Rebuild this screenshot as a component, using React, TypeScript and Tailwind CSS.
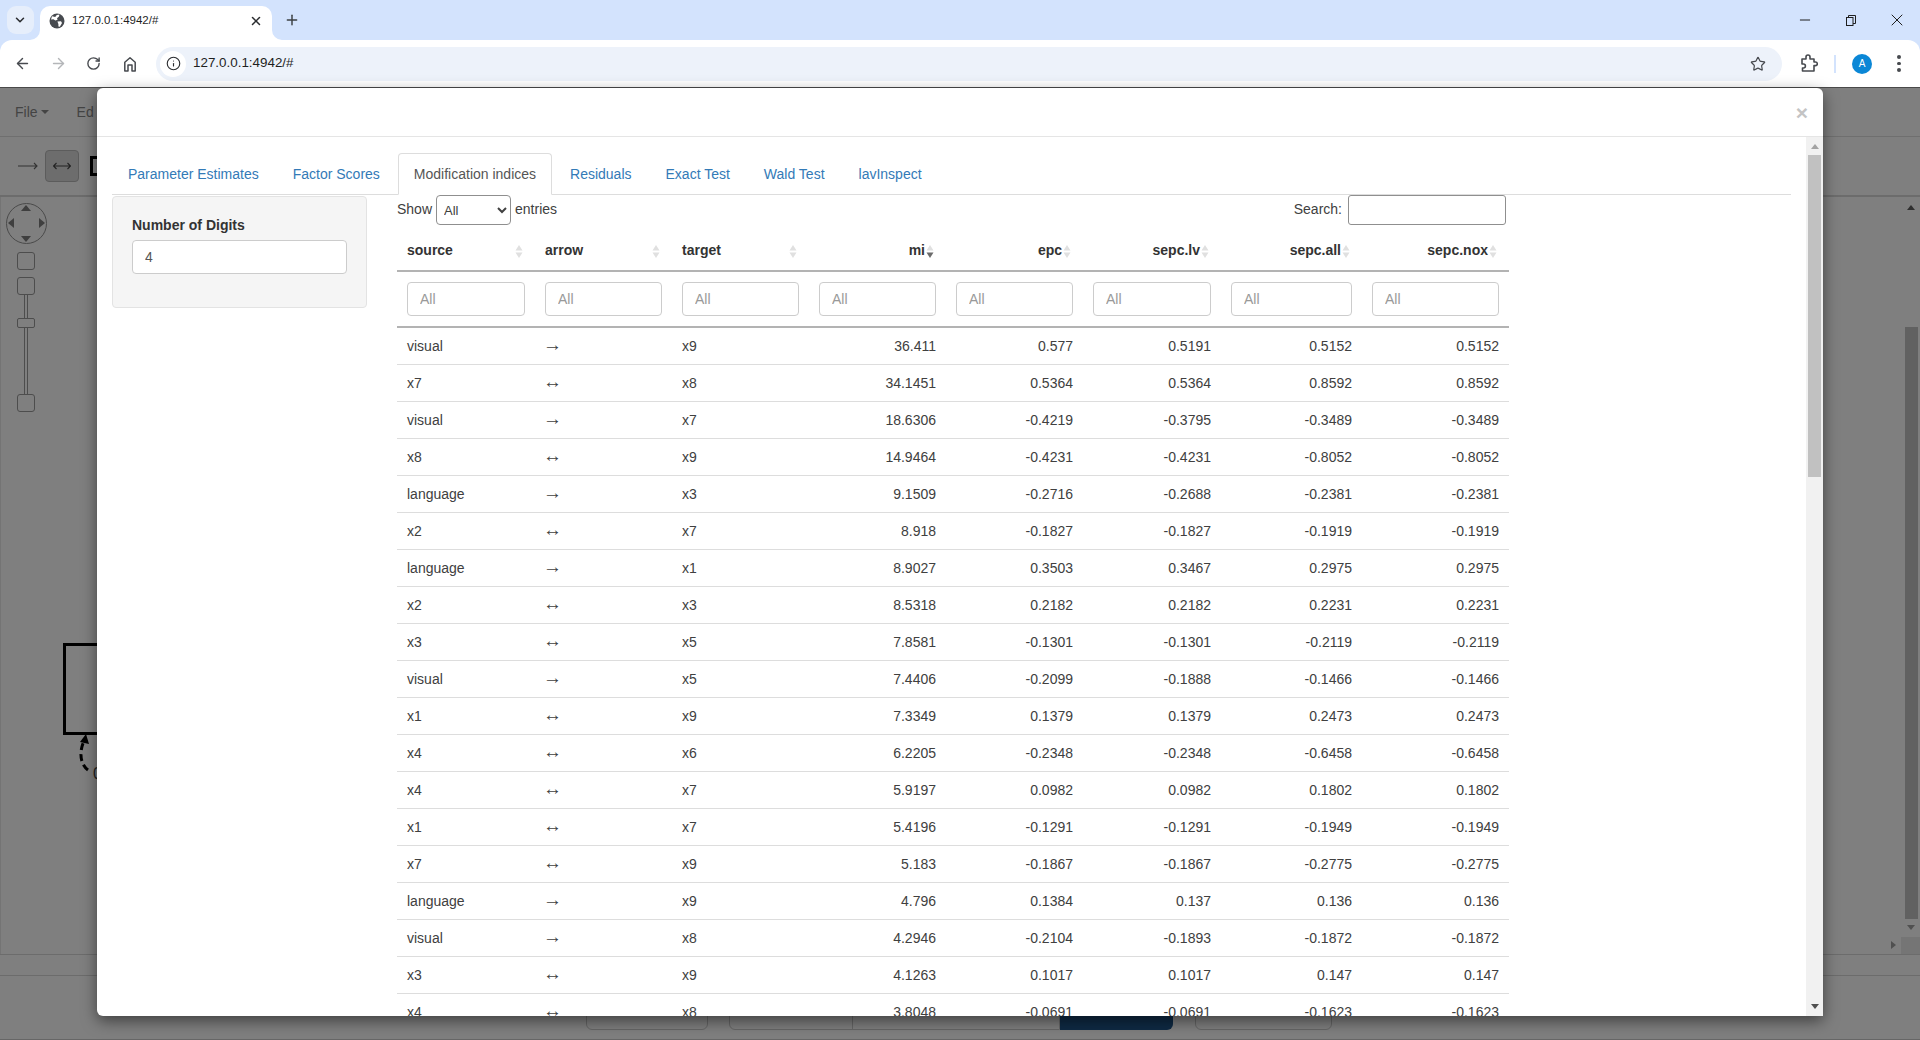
import React from "react";
import { ArrowLeft, ArrowRight, RotateCw, Info, Star, Plus, X, ChevronDown, Minus } from "lucide-react";

const rows: string[][] = [
  ["visual", "→", "x9", "36.411", "0.577", "0.5191", "0.5152", "0.5152"],
  ["x7", "↔", "x8", "34.1451", "0.5364", "0.5364", "0.8592", "0.8592"],
  ["visual", "→", "x7", "18.6306", "-0.4219", "-0.3795", "-0.3489", "-0.3489"],
  ["x8", "↔", "x9", "14.9464", "-0.4231", "-0.4231", "-0.8052", "-0.8052"],
  ["language", "→", "x3", "9.1509", "-0.2716", "-0.2688", "-0.2381", "-0.2381"],
  ["x2", "↔", "x7", "8.918", "-0.1827", "-0.1827", "-0.1919", "-0.1919"],
  ["language", "→", "x1", "8.9027", "0.3503", "0.3467", "0.2975", "0.2975"],
  ["x2", "↔", "x3", "8.5318", "0.2182", "0.2182", "0.2231", "0.2231"],
  ["x3", "↔", "x5", "7.8581", "-0.1301", "-0.1301", "-0.2119", "-0.2119"],
  ["visual", "→", "x5", "7.4406", "-0.2099", "-0.1888", "-0.1466", "-0.1466"],
  ["x1", "↔", "x9", "7.3349", "0.1379", "0.1379", "0.2473", "0.2473"],
  ["x4", "↔", "x6", "6.2205", "-0.2348", "-0.2348", "-0.6458", "-0.6458"],
  ["x4", "↔", "x7", "5.9197", "0.0982", "0.0982", "0.1802", "0.1802"],
  ["x1", "↔", "x7", "5.4196", "-0.1291", "-0.1291", "-0.1949", "-0.1949"],
  ["x7", "↔", "x9", "5.183", "-0.1867", "-0.1867", "-0.2775", "-0.2775"],
  ["language", "→", "x9", "4.796", "0.1384", "0.137", "0.136", "0.136"],
  ["visual", "→", "x8", "4.2946", "-0.2104", "-0.1893", "-0.1872", "-0.1872"],
  ["x3", "↔", "x9", "4.1263", "0.1017", "0.1017", "0.147", "0.147"],
  ["x4", "↔", "x8", "3.8048", "-0.0691", "-0.0691", "-0.1623", "-0.1623"],
];

const headers = ["source", "arrow", "target", "mi", "epc", "sepc.lv", "sepc.all", "sepc.nox"];
const tabs = ["Parameter Estimates", "Factor Scores", "Modification indices", "Residuals", "Exact Test", "Wald Test", "lavInspect"];

function SortIcon({ active }: { active?: boolean }) {
  return (
    <svg className="absolute right-[12px] top-[20px]" width="8" height="13" viewBox="0 0 8 13">
      <path d="M4 0 L7.5 5.5 H0.5 Z" fill="#e0e0e0" />
      <path d="M4 13 L7.5 7.5 H0.5 Z" fill={active ? "#6b6b6b" : "#e0e0e0"} />
    </svg>
  );
}

function GlobeIcon() {
  return (
    <svg width="16" height="16" viewBox="0 0 16 16">
      <circle cx="8" cy="8" r="7.5" fill="#474a4f" />
      <path d="M3 3.2 L6.2 4 L7.8 2 L10.4 1.4 L10 3.6 L8 5.2 L8.6 6.8 L6.4 7.6 L4.4 6.2 L2 6.4 Z" fill="#fff" />
      <path d="M8.4 8.4 L12 8.2 L13 10 L10.8 13.8 L9.4 13.4 L9.4 11 Z" fill="#fff" />
    </svg>
  );
}

function HomeIcon() {
  return (
    <svg width="16" height="16" viewBox="0 0 16 16" fill="none" stroke="#474a4f" strokeWidth="1.5">
      <path d="M2.8 15 V6.2 L8 1.8 L13.2 6.2 V15 H10 V9 H6 V15 Z" strokeLinejoin="round" />
    </svg>
  );
}

function PuzzleIcon() {
  return (
    <svg width="18" height="19" viewBox="0 0 18 19" fill="none" stroke="#474a4f" strokeWidth="1.6">
      <path d="M2 5 H6 V3 A2 2 0 0 1 10 3 V5 H14 V8 H15.5 A1.8 1.8 0 0 1 15.5 11.6 H14 V17 H2.5 V14 H3.4 A1.8 1.8 0 0 0 3.4 10 H2 Z" strokeLinejoin="round" />
    </svg>
  );
}

function Diagram() {
  return (
    <>
      <div className="absolute left-[62px] top-[446px] w-[50px] h-[92px] border-[3px] border-black" />
      <svg className="absolute left-[68px] top-[537px]" width="26" height="40" viewBox="0 0 26 40">
        <path d="M19 36 C11 30 10 18 15 7" fill="none" stroke="#000" strokeWidth="3" strokeDasharray="7 4" />
        <path d="M17 0 L20 10 L11 8 Z" fill="#000" />
      </svg>
      <span className="absolute left-[92px] top-[568px] text-[16px] leading-[18px] text-[#222]">0</span>
    </>
  );
}

function LeftTools() {
  return (
    <div className="absolute left-[3px] top-[6px] w-[44px] flex flex-col items-center">
      <div className="relative ml-[1px] w-[41px] h-[41px] rounded-full border border-[#4a4a4a]">
        <span className="absolute left-[14px] top-[1px] w-0 h-0 border-x-[5px] border-x-transparent border-b-[6px] border-b-[#3f3f3f]" />
        <span className="absolute left-[14px] bottom-[1px] w-0 h-0 border-x-[5px] border-x-transparent border-t-[6px] border-t-[#3f3f3f]" />
        <span className="absolute left-[1px] top-[14px] w-0 h-0 border-y-[5px] border-y-transparent border-r-[6px] border-r-[#3f3f3f]" />
        <span className="absolute right-[1px] top-[14px] w-0 h-0 border-y-[5px] border-y-transparent border-l-[6px] border-l-[#3f3f3f]" />
      </div>
      <div className="mt-[8px] w-[18px] h-[18px] rounded-[3px] border border-[#4d4d4d]" />
      <div className="mt-[7px] w-[18px] h-[18px] rounded-[3px] border border-[#4d4d4d]" />
      <div className="w-[4px] h-[23px] border-x border-[#4d4d4d]" />
      <div className="w-[18px] h-[10px] rounded-[2px] border border-[#4d4d4d]" />
      <div className="w-[4px] h-[66px] border-x border-[#4d4d4d]" />
      <div className="w-[18px] h-[18px] rounded-[3px] border border-[#4d4d4d]" />
    </div>
  );
}

function CanvasScrollbars() {
  return (
    <>
      <div className="absolute right-0 top-0 bottom-0 w-[19px] flex flex-col items-center">
        <span className="mt-[8px] w-0 h-0 border-x-[4px] border-x-transparent border-b-[5px] border-b-[#2f2f2f]" />
        <div className="mt-[117px] ml-[1px] w-[13px] h-[592px] bg-[#616161]" />
        <span className="mt-[6px] w-0 h-0 border-x-[4px] border-x-transparent border-t-[5px] border-t-[#505050]" />
        <div className="mt-auto h-[17px] w-[19px] bg-[#757575]" />
      </div>
      <span className="absolute right-[24px] bottom-[5px] w-0 h-0 border-y-[4px] border-y-transparent border-l-[5px] border-l-[#505050]" />
    </>
  );
}

function BrowserChrome() {
  return (
    <div className="shrink-0 bg-[#d3e3fd]">
      <div className="h-[40px] flex items-start relative">
        <div className="ml-[7px] mt-[6px] w-[27px] h-[28px] rounded-[9px] bg-[#e6eefb] flex items-center justify-center pr-[2px]">
          <ChevronDown size={14} strokeWidth={2.6} color="#2b2d30" />
        </div>
        <div className="relative ml-[6px] mt-[6px] w-[232px] h-[34px] bg-white rounded-t-[10px] flex items-center pl-[9px] pr-[9px] pb-[5px]">
          <svg className="absolute -left-[10px] bottom-0" width="10" height="10" viewBox="0 0 10 10"><path d="M10 0 V10 H0 A10 10 0 0 0 10 0 Z" fill="#fff" /></svg>
          <svg className="absolute -right-[10px] bottom-0" width="10" height="10" viewBox="0 0 10 10"><path d="M0 0 V10 H10 A10 10 0 0 1 0 0 Z" fill="#fff" /></svg>
          <GlobeIcon />
          <span className="ml-[7px] mt-[1px] text-[11.5px] text-[#1f1f1f]">127.0.0.1:4942/#</span>
          <X className="ml-auto" size={14} strokeWidth={2.6} color="#2b2d30" />
        </div>
        <Plus className="ml-[12px] mt-[12px]" size={16} strokeWidth={2.2} color="#3c4043" />
        <div className="ml-auto flex items-center h-[40px]">
          <Minus size={16} strokeWidth={1.5} color="#1f1f1f" className="mr-[33px]" />
          <svg width="10" height="11" viewBox="0 0 10 11" fill="none" stroke="#1f1f1f" strokeWidth="1" className="mr-[31px]">
            <rect x="0.5" y="2.5" width="6.5" height="8" />
            <path d="M2.5 2.5 V0.5 H9.5 V8.5 H7" />
          </svg>
          <X size={20} strokeWidth={1.2} color="#1f1f1f" className="mr-[13px]" />
        </div>
      </div>
      <div className="h-[47px] bg-white rounded-t-[12px] flex items-center">
        <ArrowLeft className="ml-[14px]" size={17} strokeWidth={2} color="#474a4f" />
        <ArrowRight className="ml-[19px]" size={17} strokeWidth={2} color="#b4b6b9" />
        <RotateCw className="ml-[19px]" size={15} strokeWidth={2.2} color="#474a4f" />
        <div className="ml-[21px]"><HomeIcon /></div>
        <div className="ml-[18px] w-[1626px] h-[34px] rounded-full bg-[#edf2fa] flex items-center pl-[4px]">
          <div className="w-[26px] h-[26px] rounded-full bg-white flex items-center justify-center">
            <Info size={15} strokeWidth={1.8} color="#2b2d30" />
          </div>
          <span className="ml-[7px] text-[13.4px] text-[#1f1f1f]">127.0.0.1:4942/#</span>
          <Star className="ml-auto mr-[16px]" size={16} strokeWidth={1.8} color="#474a4f" />
        </div>
        <div className="ml-[18px]"><PuzzleIcon /></div>
        <div className="ml-[16px] w-[2px] h-[18px] bg-[#d3e3fd]" />
        <div className="ml-[16px] w-[20px] h-[20px] rounded-full bg-[#0b87d6] text-white text-[10px] flex items-center justify-center">A</div>
        <div className="ml-[25px] flex flex-col gap-[3px]">
          <span className="w-[3.5px] h-[3.5px] rounded-full bg-[#474a4f]" />
          <span className="w-[3.5px] h-[3.5px] rounded-full bg-[#474a4f]" />
          <span className="w-[3.5px] h-[3.5px] rounded-full bg-[#474a4f]" />
        </div>
      </div>
    </div>
  );
}

function PageBehind() {
  return (
    <div className="flex-1 flex flex-col min-h-0 border-t border-[#4a4a4a] bg-[#7f7f7f]">
      <div className="h-[49px] shrink-0 border-b border-[#6f6f6f] flex items-center text-[14px] text-[#444]">
        <span className="ml-[15px]">File</span>
        <span className="ml-[3px] w-0 h-0 border-x-[4px] border-x-transparent border-t-[4px] border-t-[#444]" />
        <span className="ml-[28px]">Ed</span>
      </div>
      <div className="h-[60px] shrink-0 border-b-2 border-[#6c6c6c] flex items-center">
        <svg className="ml-[18px]" width="20" height="10" viewBox="0 0 20 10" fill="none" stroke="#333" strokeWidth="1.1">
          <path d="M0 5 H19 M16 2 L19 5 L16 8" />
        </svg>
        <div className="ml-[7px] w-[34px] h-[32px] rounded-[4px] bg-[#6d6d6d] border border-[#5c5c5c] flex items-center justify-center">
          <svg width="18" height="10" viewBox="0 0 18 10" fill="none" stroke="#222" strokeWidth="1.1">
            <path d="M0.5 5 H17.5 M3.5 2 L0.5 5 L3.5 8 M14.5 2 L17.5 5 L14.5 8" />
          </svg>
        </div>
        <div className="ml-[11px] w-[20px] h-[20px] border-[3px] border-black" />
      </div>
      <div className="relative flex-1 border-l border-[#747474]">
        <LeftTools />
        <Diagram />
        <CanvasScrollbars />
      </div>
      <div className="h-[22px] shrink-0 border-y border-[#6c6c6c]" />
      <div className="h-[64px] shrink-0 border-b border-[#666] flex items-end pb-[9px] pl-[586px]">
        <div className="w-[122px] h-[40px] rounded-b-[6px] border border-[#666]" />
        <div className="ml-[21px] w-[331px] h-[40px] rounded-bl-[6px] border border-[#666] flex">
          <div className="w-[123px] border-r border-[#666]" />
        </div>
        <div className="w-[113px] h-[40px] rounded-br-[6px] bg-[#0f2a44]" />
        <div className="ml-[22px] w-[137px] h-[40px] rounded-b-[6px] border border-[#666]" />
      </div>
    </div>
  );
}

function ModalScrollbar() {
  return (
    <div className="w-[17px] shrink-0 bg-[#f1f1f1] flex flex-col items-center">
      <span className="mt-[7px] w-0 h-0 border-x-[4px] border-x-transparent border-b-[5px] border-b-[#a3a3a3]" />
      <div className="mt-[6px] w-[13px] h-[322px] bg-[#c1c1c1]" />
      <span className="mt-auto mb-[7px] w-0 h-0 border-x-[4px] border-x-transparent border-t-[5px] border-t-[#505050]" />
    </div>
  );
}

function DataTable() {
  return (
    <table className="table-fixed border-separate border-spacing-0 w-[1112px] text-[14px] text-[#333]">
      <colgroup>
        <col className="w-[138px]" />
        <col className="w-[137px]" />
        <col className="w-[137px]" />
        <col className="w-[137px]" />
        <col className="w-[137px]" />
        <col className="w-[138px]" />
        <col className="w-[141px]" />
        <col className="w-[147px]" />
      </colgroup>
      <thead>
        <tr>
          {headers.map((h, i) => (
            <th
              key={h}
              className={
                i < 3
                  ? "relative h-[47px] pt-[5px] pl-[10px] pr-[21px] text-left font-bold border-b-2 border-[#b3b3b3]"
                  : "relative h-[47px] pt-[5px] pl-[10px] pr-[21px] text-right font-bold border-b-2 border-[#b3b3b3]"
              }
            >
              {h}
              <SortIcon active={h === "mi"} />
            </th>
          ))}
        </tr>
        <tr>
          {headers.map((h) => (
            <td key={h} className="h-[56px] px-[10px] border-b-2 border-[#b3b3b3] align-top pt-[10px]">
              <input
                placeholder="All"
                className="w-full h-[34px] px-[12px] rounded-[4px] border border-[#ccc] text-[14px] bg-white placeholder:text-[#999]"
              />
            </td>
          ))}
        </tr>
      </thead>
      <tbody>
        {rows.map((r, ri) => (
          <tr key={ri}>
            {r.map((c, ci) => (
              <td
                key={ci}
                className={
                  ci < 3
                    ? "h-[37px] px-[10px] border-b border-[#ddd] text-left text-[#404040]"
                    : "h-[37px] px-[10px] border-b border-[#ddd] text-right text-[#404040]"
                }
              >
                {ci === 1 ? <span className="-ml-[2px] text-[19px] leading-[14px]">{c}</span> : c}
              </td>
            ))}
          </tr>
        ))}
      </tbody>
    </table>
  );
}

function Modal() {
  return (
    <div className="absolute left-[97px] top-[88px] w-[1726px] h-[928px] bg-white rounded-t-[6px] rounded-bl-[6px] shadow-[0_5px_15px_rgba(0,0,0,0.5)] flex flex-col overflow-hidden">
      <div className="h-[49px] shrink-0 border-b border-[#e5e5e5] flex items-center justify-end pr-[15px]">
        <span className="text-[21px] font-bold leading-none text-[#c4c4c4]">×</span>
      </div>
      <div className="flex-1 min-h-0 flex">
        <div className="flex-1 min-w-0 overflow-hidden pt-[16px] px-[15px]">
          <ul className="flex h-[42px] border-b border-[#ddd] text-[14px]">
            {tabs.map((t) =>
              t === "Modification indices" ? (
                <li key={t} className="mr-[2px] h-[42px] px-[15px] flex items-center bg-white text-[#555] border border-[#ddd] border-b-white rounded-t-[4px]">
                  {t}
                </li>
              ) : (
                <li key={t} className="mr-[2px] h-[42px] px-[16px] flex items-center text-[#337ab7]">
                  {t}
                </li>
              )
            )}
          </ul>
          <div className="flex gap-[30px] items-start">
            <div className="mt-[1px] w-[255px] h-[112px] shrink-0 bg-[#f5f5f5] border border-[#e3e3e3] rounded-[4px] px-[19px] pt-[18px]">
              <div className="text-[14px] font-bold leading-[20px] text-[#333]">Number of Digits</div>
              <input
                defaultValue="4"
                className="mt-[5px] w-full h-[34px] px-[12px] rounded-[4px] border border-[#ccc] bg-white text-[14px] text-[#555]"
              />
            </div>
            <div className="w-[1112px] shrink-0">
              <div className="h-[30px] flex items-center text-[14px] text-[#404040]">
                <span className="mb-[1px]">Show</span>
                <select className="ml-[4px] mr-[4px] w-[75px] h-[30px] pl-[3px] rounded-[4px] border border-[#8f8f8f] bg-white text-[13px]">
                  <option>All</option>
                </select>
                <span className="mb-[1px]">entries</span>
                <span className="ml-auto mb-[1px]">Search:</span>
                <input className="ml-[6px] mr-[3px] w-[158px] h-[30px] rounded-[3px] border border-[#8f8f8f] bg-white" />
              </div>
              <DataTable />
            </div>
          </div>
        </div>
        <ModalScrollbar />
      </div>
    </div>
  );
}

export default function App() {
  return (
    <div className="relative w-[1920px] h-[1040px] overflow-hidden flex flex-col font-['Liberation_Sans',Arial,sans-serif]">
      <BrowserChrome />
      <PageBehind />
      <Modal />
    </div>
  );
}
